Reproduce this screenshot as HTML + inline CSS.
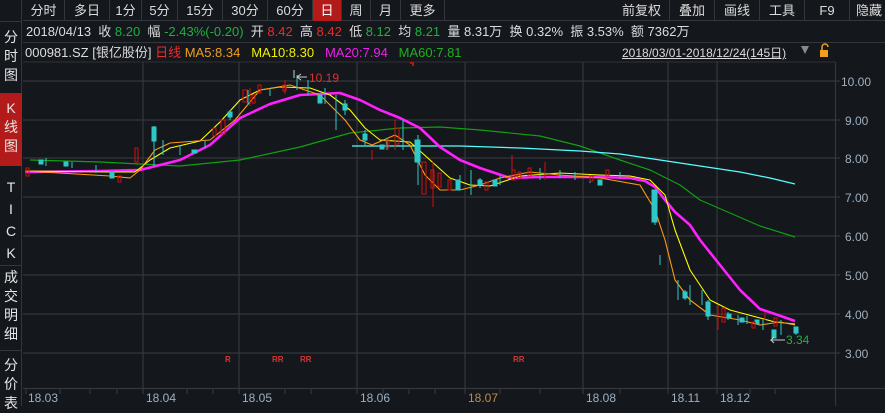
<!DOCTYPE html>
<html><head><meta charset="utf-8"><style>
*{margin:0;padding:0;box-sizing:border-box}
body{width:885px;height:406px;background:#14171c;overflow:hidden;font-family:"Liberation Sans","Noto Sans CJK SC",sans-serif;position:relative;color:#d0d0d0}
.tb{position:absolute;left:23px;top:0;height:21px;right:0;border-bottom:1px solid #33363b}
.tb span{position:absolute;top:0;height:21px;line-height:21px;font-size:13px;text-align:center;border-right:1px solid #33363b;color:#dcdcdc}
.side{position:absolute;left:0;top:0;width:22px;height:406px;border-right:1px solid #33363b}
.side div{position:absolute;left:0;width:22px;text-align:center;font-size:14px;line-height:19px;color:#e6e6e6}
.r2{position:absolute;left:26px;top:22px;font-size:13px;line-height:20px;white-space:pre;color:#dcdcdc}
.r3{position:absolute;left:25px;top:43px;font-size:13px;line-height:19px;white-space:pre}
.g{color:#20b040}.rd{color:#ee2a2a}
</style></head><body>
<div class="side">
<div style="top:21px;height:1px;background:#33363b"></div>
<div style="top:28px">分<br>时<br>图</div>
<div style="top:93px;height:73px;background:#b31b1b;padding-top:6px">K<br>线<br>图</div>
<div style="top:176px;line-height:22px">T<br>I<br>C<br>K</div>
<div style="top:265px;height:1px;background:#33363b"></div>
<div style="top:268px">成<br>交<br>明<br>细</div>
<div style="top:350px;height:1px;background:#33363b"></div>
<div style="top:356px">分<br>价<br>表</div>
</div>
<div class="tb">
<span style="left:0;width:42px">分时</span><span style="left:42px;width:45px">多日</span><span style="left:87px;width:32px">1分</span><span style="left:119px;width:36px">5分</span><span style="left:155px;width:45px">15分</span><span style="left:200px;width:45px">30分</span><span style="left:245px;width:45px">60分</span><span style="left:290px;width:29px;background:#b31b1b;color:#fff">日</span><span style="left:319px;width:29px">周</span><span style="left:348px;width:30px">月</span><span style="left:378px;width:44px">更多</span>
<span style="left:591px;width:56px">前复权</span><span style="left:647px;width:45px">叠加</span><span style="left:692px;width:45px">画线</span><span style="left:737px;width:45px">工具</span><span style="left:782px;width:45px">F9</span><span style="left:827px;width:40px;border:none;text-align:left;padding-left:6px">隐藏</span>
</div>
<div class="r2">2018/04/13  收 <span class="g">8.20</span>  幅 <span class="g">-2.43%(-0.20)</span>  开 <span class="rd">8.42</span>  高 <span class="rd">8.42</span>  低 <span class="g">8.12</span>  均 <span class="g">8.21</span>  量 8.31万  换 0.32%  振 3.53%  额 7362万</div>
<div style="position:absolute;left:23px;top:42px;width:862px;height:1px;background:#33363b"></div>
<div class="r3"><span style="color:#dcdcdc">000981.SZ [银亿股份]</span> <span class="rd">日线</span> <span style="color:#f0a020">MA5:8.34</span>   <span style="color:#f0f000">MA10:8.30</span>   <span style="color:#ee20ee">MA20:7.94</span>   <span style="color:#20b020">MA60:7.81</span></div>
<div style="position:absolute;left:622px;top:44px;font-size:12px;line-height:18px;color:#dcdcdc;text-decoration:underline">2018/03/01-2018/12/24(145日)</div>
<svg width="885" height="406" style="position:absolute;left:0;top:0">
<g stroke="#34373c" stroke-width="1.2" fill="none">
<line x1="23" y1="62" x2="835" y2="62" stroke="#2a2d32"/>
<path d="M23 81H840M23 120H840M23 158H840M23 197H840M23 236H840M23 275H840M23 314H840M23 353H840"/>
<path d="M143 62V388M239 62V388M357 62V388M465 62V388M583 62V388M668 62V388M717 62V388"/>
<line x1="835.5" y1="62" x2="835.5" y2="406"/>
<line x1="23" y1="388.5" x2="885" y2="388.5"/>
<path d="M26 389v5M60 389v5M90 389v5M117 389v5M143 389v5M187 389v5M213 389v5M239 389v5M285 389v5M311 389v5M357 389v5M383 389v5M409 389v5M435 389v5M465 389v5M500 389v5M540 389v5M583 389v5M620 389v5M668 389v5M717 389v5M750 389v5M775 389v5"/>
</g>
<path d="M801 46l4 8 4-8z" fill="#8a8a8a"/>
<rect x="820" y="50" width="8" height="7" fill="#f0a020"/><path d="M822 50v-3a3 3 0 0 1 6 0" stroke="#f0a020" fill="none" stroke-width="1.5"/>
<rect x="410" y="62" width="4" height="2" fill="#c01010"/><rect x="412" y="62" width="2" height="4" fill="#c01010"/>
<g fill="none" stroke-linejoin="round">
<polyline stroke="#10a010" stroke-width="1.2" points="30,160 100,162 180,166 240,160 300,147 350,133 400,128 440,127 480,130 540,136 580,146 620,160 650,170 680,185 700,200 730,213 760,226 795,237"/>
<polyline stroke="#5ff" stroke-width="1.2" points="352,146 460,146 520,148 580,151 620,154 660,160 700,166 740,172 770,178 795,184"/>
<polyline stroke="#ff20ff" stroke-width="2.6" points="25,172 100,171 140,170 180,160 210,145 240,118 270,104 300,95 340,93 360,100 380,110 400,118 420,128 440,147 460,160 480,168 510,178 540,177 600,177 630,178 645,181 655,187 665,200 675,212 690,225 700,240 720,265 740,290 760,309 775,314 795,321"/>
<polyline stroke="#ffff00" stroke-width="1.1" points="25,171 110,172 135,172 150,160 170,148 200,141 220,122 240,100 260,90 280,87 310,88 330,95 350,110 365,128 380,140 395,141 410,142 430,160 450,178 470,185 490,186 520,176 560,173 600,175 630,176 650,180 665,195 675,230 690,270 710,300 730,310 760,318 775,322 795,324"/>
<polyline stroke="#ff9a10" stroke-width="1.1" points="25,171 110,176 130,178 140,170 155,150 170,143 210,140 235,120 260,90 290,85 320,95 345,120 360,140 372,145 395,135 410,145 425,175 440,190 460,190 480,185 500,178 530,172 560,175 600,178 640,185 655,210 665,240 675,280 690,300 710,315 740,320 760,325 780,322 795,325"/>
</g>
<g stroke="#2ec8c8" fill="#2ec8c8" stroke-width="1">
<path d="M154 126v40M163 140v15M248 90v15M297 75v15M308 80v15M336 95v35M403 120v30M418 135v50M471 170v25M540 168v12M655 190v35M678 280v20M690 285v20M702 290v15M708 300v20M738 315v10M781 320v15M796 327v8M46 158v8M72 162v6M96 165v8M180 145v10M205 140v8M230 110v10M270 88v8M285 82v10M325 88v16M345 100v15M365 130v15M387 138v12M460 175v12M480 178v10M500 175v10M560 170v8M575 172v8M590 175v8M620 172v6M660 255v10M685 290v10M728 312v8M747 316v8M763 320v10"/>
<rect x="152" y="127" width="4" height="14"/><rect x="415" y="140" width="5" height="22"/><rect x="652" y="190" width="5" height="32"/><rect x="706" y="302" width="4" height="14"/><rect x="772" y="330" width="4" height="8"/><rect x="794" y="327" width="4" height="6"/>
<rect x="39" y="160" width="4" height="4"/><rect x="64" y="162" width="4" height="4"/><rect x="110" y="172" width="4" height="6"/><rect x="192" y="150" width="5" height="3"/><rect x="318" y="95" width="4" height="8"/><rect x="380" y="145" width="4" height="4"/><rect x="456" y="180" width="4" height="10"/><rect x="493" y="180" width="4" height="6"/><rect x="598" y="180" width="4" height="5"/><rect x="740" y="318" width="4" height="4"/><rect x="755" y="320" width="4" height="4"/>
<rect x="228" y="112" width="4" height="5"/><rect x="343" y="104" width="4" height="6"/><rect x="363" y="134" width="4" height="6"/><rect x="478" y="180" width="4" height="5"/><rect x="683" y="292" width="4" height="6"/><rect x="727" y="314" width="4" height="4"/>
</g>
<g stroke="#d01010" fill="none" stroke-width="1">
<rect x="26" y="168" width="3" height="8"/><rect x="135" y="148" width="3" height="14"/><rect x="221" y="120" width="4" height="14"/><rect x="243" y="90" width="4" height="12"/><rect x="258" y="85" width="3" height="8"/><rect x="395" y="128" width="4" height="16"/><rect x="422" y="162" width="4" height="32"/><rect x="431" y="170" width="3" height="18"/><rect x="438" y="173" width="3" height="14"/><rect x="512" y="170" width="3" height="10"/><rect x="528" y="168" width="3" height="8"/><rect x="606" y="170" width="3" height="6"/><rect x="722" y="308" width="3" height="14"/><rect x="774" y="318" width="3" height="8"/>
<rect x="118" y="176" width="3" height="6"/><rect x="213" y="128" width="3" height="8"/><rect x="252" y="95" width="3" height="8"/><rect x="283" y="85" width="3" height="6"/><rect x="386" y="140" width="3" height="8"/><rect x="448" y="180" width="3" height="10"/><rect x="485" y="182" width="3" height="8"/><rect x="518" y="172" width="3" height="6"/><rect x="590" y="176" width="3" height="5"/><rect x="752" y="322" width="3" height="6"/>
<path d="M433 162v45M372 150v10M512 155v25M718 305v25M765 312v8M250 88v18M285 80v14M395 120v30M545 162v18"/>
</g>
<g font-family="Liberation Sans" font-size="12" fill="#9fb0c0">
<text x="841" y="86">10.00</text><text x="845" y="125">9.00</text><text x="845" y="163">8.00</text><text x="845" y="202">7.00</text><text x="845" y="241">6.00</text><text x="845" y="280">5.00</text><text x="845" y="319">4.00</text><text x="845" y="358">3.00</text>
<text x="28" y="402">18.03</text><text x="146" y="402">18.04</text><text x="242" y="402">18.05</text><text x="360" y="402">18.06</text><text x="468" y="402" fill="#c08a50">18.07</text><text x="586" y="402">18.08</text><text x="671" y="402">18.11</text><text x="720" y="402">18.12</text>
</g>
<text x="309" y="82" font-family="Liberation Sans" font-size="12" fill="#e03030">10.19</text>
<path d="M307 77h-10M297 77l4-3M297 77l4 3M294 70v8" stroke="#ccc" fill="none"/>
<text x="786" y="344" font-family="Liberation Sans" font-size="12" fill="#20b040">3.34</text>
<path d="M785 340h-14l3-3M771 340l3 3" stroke="#ccc" fill="none"/>
<g font-family="Liberation Sans" font-size="8" fill="#e03030" font-weight="bold"><text x="225" y="362">R</text><text x="272" y="362">RR</text><text x="300" y="362">RR</text><text x="513" y="362">RR</text></g>
</svg>
</body></html>
